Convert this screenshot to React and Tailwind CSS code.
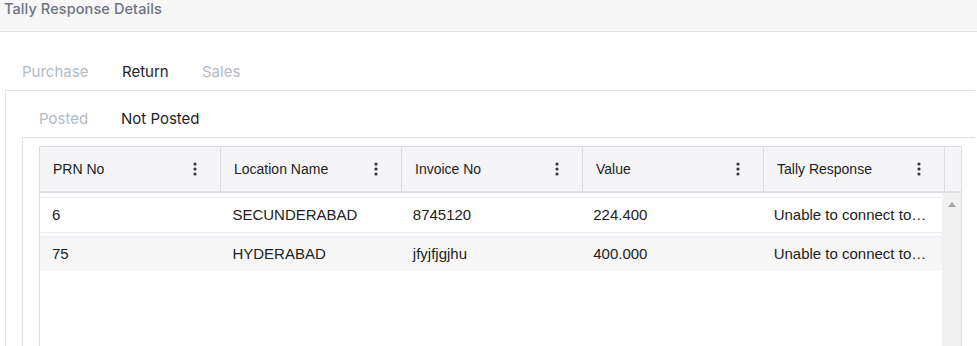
import { useState } from "react";

const columns = ["PRN No", "Location Name", "Invoice No", "Value", "Tally Response"];

const rows = [
  ["6", "SECUNDERABAD", "8745120", "224.400", "Unable to connect to Tally server"],
  ["75", "HYDERABAD", "jfyjfjgjhu", "400.000", "Unable to connect to Tally server"],
];

function Kebab() {
  return (
    <svg width="4" height="14" viewBox="0 0 4 14" className="shrink-0">
      <circle cx="2" cy="2" r="1.6" fill="#2f3640" />
      <circle cx="2" cy="7" r="1.6" fill="#2f3640" />
      <circle cx="2" cy="12" r="1.6" fill="#2f3640" />
    </svg>
  );
}

function App() {
  const [mainTab, setMainTab] = useState("Return");
  const [subTab, setSubTab] = useState("Not Posted");

  return (
    <div className="w-[977px] h-[346px] overflow-hidden bg-white font-['Inter',sans-serif]">
      <header className="h-[32px] bg-[#f7f7f7] border-b border-[#e2e2e2] px-[4px]">
        <h4 className="text-[14.5px] leading-[17px] text-[#6f7283] font-medium tracking-[0.1px]">Tally Response Details</h4>
      </header>

      <div className="flex items-start pl-[22px] pt-[30px] h-[58px] text-[15px] leading-[20px]">
        {["Purchase", "Return", "Sales"].map((t) => (
          <button
            key={t}
            onClick={() => setMainTab(t)}
            className={`text-left ${t === "Purchase" ? "w-[100px]" : "w-[80px]"} ${
              mainTab === t ? "text-[#1f2328]" : "text-[#b3bac6]"
            }`}
          >
            {t}
          </button>
        ))}
      </div>

      <div className="ml-[5px] w-[970px] border-l border-t border-[#e2e2e2] h-[260px]">
        <div className="flex items-start pl-[33px] pt-[18px] h-[46px] text-[15px] leading-[20px]">
          {["Posted", "Not Posted"].map((t) => (
            <button
              key={t}
              onClick={() => setSubTab(t)}
              className={`text-left ${t === "Posted" ? "w-[82px]" : ""} ${
                subTab === t ? "text-[#1f2328]" : "text-[#b3bac6]"
              }`}
            >
              {t}
            </button>
          ))}
        </div>

        <div className="ml-[16px] border-l border-t border-[#e2e2e2] h-[220px] pt-[8px] pl-[16px]">
          <div className="w-[923px] h-[210px] border border-[#dcdde3] flex flex-col font-['Liberation_Sans',sans-serif] text-[14px] text-[#222]">
            <div className="flex h-[46px] bg-[#f5f5f7] border-b-2 border-[#dfe0e6] shrink-0">
              {columns.map((c) => (
                <div
                  key={c}
                  className="w-[181px] flex items-center justify-between pl-[13px] pr-[23px] border-r border-[#dcdde3]"
                >
                  <span>{c}</span>
                  <Kebab />
                </div>
              ))}
              <div className="flex-1" />
            </div>

            <div className="flex flex-1">
              <div className="w-[902px] pt-[4px] text-[15px]">
                {rows.map((r, i) => (
                  <div
                    key={r[0]}
                    className={`flex items-center border-t border-[#e9ecf5] ${
                      i === 0 ? "h-[36px] bg-white border-b mb-[3px]" : "h-[35px] pt-[1px] bg-[#f7f7f7]"
                    }`}
                  >
                    {r.map((v, j) => (
                      <div key={j} className="w-[181px] pl-[12px] pr-[14px] truncate">
                        {v}
                      </div>
                    ))}
                  </div>
                ))}
              </div>
              <div className="w-[19px] bg-[#f1f1f1] flex justify-center pt-[9px]">
                <svg width="8" height="5" viewBox="0 0 8 5">
                  <path d="M4 0L8 5H0Z" fill="#a3a3a3" />
                </svg>
              </div>
            </div>
          </div>
        </div>
      </div>
    </div>
  );
}

export default App;
